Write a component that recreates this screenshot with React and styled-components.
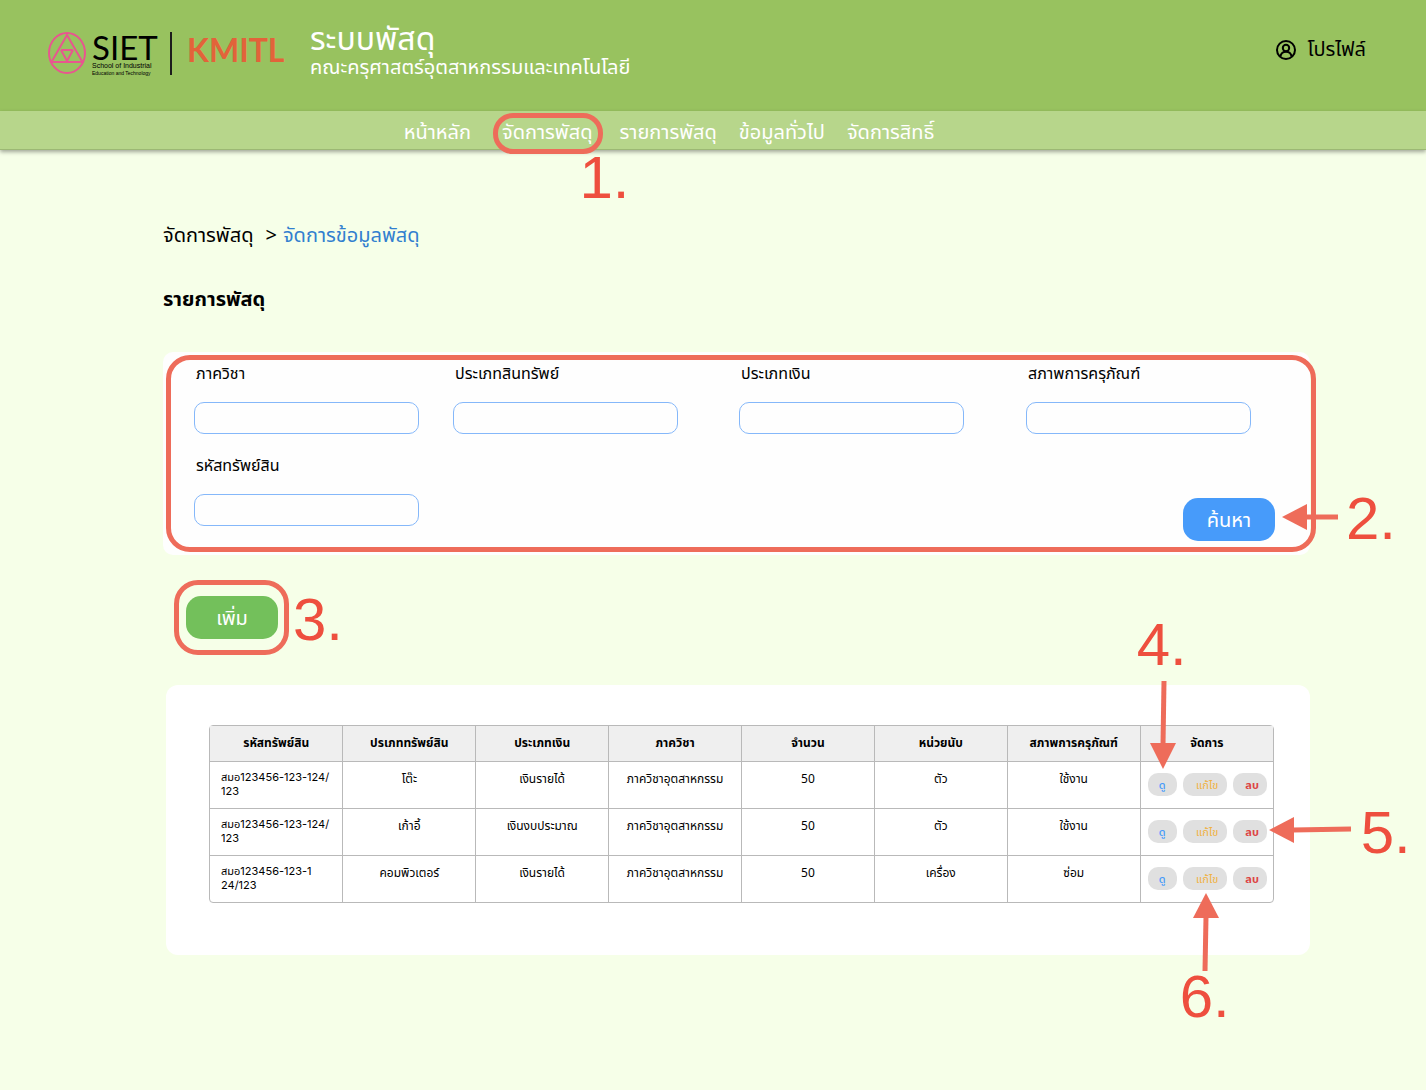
import React from "react";
import styled, { createGlobalStyle } from "styled-components";

const thai = `"Noto Sans Thai", "Noto Sans", "Open Sans", sans-serif`;

const GlobalStyle = createGlobalStyle`
  *, *::before, *::after { box-sizing: border-box; }
  body {
    margin: 0;
    min-height: 100vh;
    background: #f6ffe8;
    color: #000;
    font-family: ${thai};
    font-size: 20px;
  }
  button, input { font: inherit; }
  a { color: inherit; text-decoration: none; }
`;

const TopBar = styled.header`
  display: flex;
  align-items: flex-start;
  min-height: 111px;
  padding: 24px 60px 0 48px;
  background: #98c25f;
`;

const Brand = styled.div`
  display: flex;
  align-items: flex-start;
  padding-top: 8px;
`;

const Emblem = styled.svg`
  display: block;
  width: 38px;
  height: 42px;
`;

const Siet = styled.div`
  width: 66px;
  margin-left: 6px;
  white-space: nowrap;
`;

const SietName = styled.div`
  font-family: Lato, sans-serif;
  font-size: 33px;
  line-height: 30px;
`;

const SietLine = styled.div`
  font-family: "Liberation Sans", sans-serif;
  font-size: ${(p) => (p.$small ? 5 : 7)}px;
  line-height: ${(p) => (p.$small ? 6 : 8)}px;
`;

const BrandRule = styled.div`
  width: 2px;
  height: 43px;
  margin: 0 15px 0 12px;
  background: #1c1c1c;
`;

const Kmitl = styled.div`
  width: 95px;
  font-family: Lato, sans-serif;
  font-size: 32px;
  font-weight: 700;
  line-height: 36px;
  color: #e2633a;
`;

const Titles = styled.div`
  margin-left: 28px;
  padding-top: 1px;
  color: #fff;
`;

const AppName = styled.h1`
  margin: 0;
  font-size: 32px;
  font-weight: 400;
  line-height: 30px;
`;

const Faculty = styled.p`
  margin: 0;
  line-height: 26px;
`;

const Profile = styled.a`
  display: flex;
  align-items: center;
  gap: 10px;
  margin-left: auto;
  padding-top: 13px;
  line-height: 26px;
`;

const ProfileIcon = styled.svg`
  display: block;
  width: 22px;
  height: 22px;
`;

const NavBar = styled.nav`
  display: flex;
  justify-content: center;
  gap: 22px;
  height: 39px;
  padding: 9px 88px 0 0;
  background: #b7d68b;
  border-bottom: 1px solid #9cb874;
  box-shadow: 0 2px 4px rgba(0, 0, 0, 0.35);
  color: #fff;
  line-height: 26px;
`;

const NavLink = styled.a`
  position: relative;
  margin: ${(p) => (p.$active ? "0 5px 0 9px" : "0")};
  white-space: nowrap;
`;

const Ring = styled.span`
  position: absolute;
  inset: ${(p) => p.$inset};
  border: 5px solid #ee6c5a;
  border-radius: ${(p) => p.$radius}px;
  pointer-events: none;
`;

const StepNumber = styled.span`
  position: absolute;
  top: ${(p) => p.$top}px;
  left: ${(p) => p.$left};
  color: #ee4f3e;
  font-family: "Liberation Sans", Arial, sans-serif;
  font-size: 60px;
  font-weight: 400;
  line-height: 60px;
  pointer-events: none;
`;

const ArrowSvg = styled.svg`
  position: absolute;
  top: ${(p) => p.$top}px;
  left: ${(p) => p.$left};
  pointer-events: none;
  overflow: visible;
`;

const Main = styled.main`
  padding: 72px 116px 60px 163px;
`;

const Crumbs = styled.div`
  display: flex;
  line-height: 28px;
`;

const CrumbMark = styled.span`
  margin: 0 6px 0 12px;
`;

const CrumbLink = styled.a`
  color: #327fcf;
`;

const Heading = styled.h2`
  margin: 36px 0 38px;
  font-size: 20px;
  font-weight: 700;
  line-height: 28px;
`;

const SearchPanel = styled.form`
  position: relative;
  display: grid;
  grid-template-columns: 259fr 286fr 287fr 284fr;
  align-content: start;
  row-gap: 20px;
  min-height: 203px;
  padding: 10px 0 0 31px;
  background: #fefefe;
  border-radius: 10px;
`;

const Field = styled.div`
  display: flex;
  flex-direction: column;
  align-items: flex-start;
  gap: 16px;
`;

const FieldLabel = styled.label`
  padding-left: 2px;
  font-size: 16px;
  line-height: 24px;
`;

const TextBox = styled.input`
  width: 225px;
  height: 32px;
  padding: 0 10px;
  background: #fefefe;
  border: 1px solid #85b8fa;
  border-radius: 10px;
  font-size: 16px;
`;

const ActionButton = styled.button`
  display: block;
  width: 92px;
  height: 43px;
  padding: 2px 0 0;
  border: 0;
  border-radius: 15px;
  background: ${(p) => p.$fill};
  color: #fff;
  line-height: 26px;
`;

const SearchSlot = styled.div`
  position: relative;
  grid-column: 4;
  justify-self: end;
  align-self: end;
  margin-right: 35px;
  margin-bottom: -15px;
`;

const AddSlot = styled.div`
  position: relative;
  width: 92px;
  height: 43px;
  margin: 41px 0 46px 23px;
`;

const TableCard = styled.section`
  margin-left: 3px;
  padding: 40px 36px 52px 43px;
  background: #fff;
  border-radius: 12px;
`;

const Frame = styled.div`
  border: 1px solid #b9b9b9;
  border-radius: 4px;
`;

const Table = styled.table`
  width: 100%;
  border-collapse: collapse;
  table-layout: fixed;
  font-size: 12px;
`;

const Th = styled.th`
  height: 35px;
  padding: 0;
  background: #efefef;
  font-weight: 700;
  line-height: 18px;
  &:not(:first-child) { border-left: 1px solid #b9b9b9; }
`;

const Td = styled.td`
  height: 47px;
  padding: 8px 0 0;
  border-top: 1px solid #b9b9b9;
  line-height: 18px;
  text-align: center;
  vertical-align: top;
  &:not(:first-child) { border-left: 1px solid #b9b9b9; }
`;

const CodeTd = styled(Td)`
  padding: 8px 10px 0 11px;
  font-family: Inter, ${thai};
  font-size: 11px;
  line-height: 14px;
  text-align: left;
`;

const Actions = styled.div`
  display: flex;
  gap: 6px;
  padding: 3px 0 0 7px;
`;

const Pill = styled.button`
  position: relative;
  width: ${(p) => p.$width}px;
  height: 23px;
  padding: ${(p) => p.$padding};
  border: 0;
  border-radius: 10px;
  background: #e0e0e0;
  color: ${(p) => p.$color};
  font-size: 11px;
  font-weight: ${(p) => p.$weight || 400};
  line-height: 16px;
`;

const rows = [
  [["สมอ123456-123-124/", "123"], "โต๊ะ", "เงินรายได้", "ภาควิชาอุตสาหกรรม", "50", "ตัว", "ใช้งาน"],
  [["สมอ123456-123-124/", "123"], "เก้าอี้", "เงินงบประมาณ", "ภาควิชาอุตสาหกรรม", "50", "ตัว", "ใช้งาน"],
  [["สมอ123456-123-1", "24/123"], "คอมพิวเตอร์", "เงินรายได้", "ภาควิชาอุตสาหกรรม", "50", "เครื่อง", "ซ่อม"],
];

const headings = ["รหัสทรัพย์สิน", "ปรเภททรัพย์สิน", "ประเภทเงิน", "ภาควิชา", "จำนวน", "หน่วยนับ", "สภาพการครุภัณฑ์", "จัดการ"];

const fields = [
  ["dept", "ภาควิชา"],
  ["asset", "ประเภทสินทรัพย์"],
  ["fund", "ประเภทเงิน"],
  ["state", "สภาพการครุภัณฑ์"],
  ["code", "รหัสทรัพย์สิน"],
];

function Arrow({ top, left, width, height, shaft, head }) {
  return (
    <ArrowSvg $top={top} $left={left} width={width} height={height} viewBox={`0 0 ${width} ${height}`} aria-hidden="true">
      <path d={shaft} stroke="#ee6c5a" strokeWidth="5" fill="none" />
      <path d={head} fill="#ee6c5a" />
    </ArrowSvg>
  );
}

function Logo() {
  return (
    <Brand>
      <Emblem viewBox="0 0 38 42" fill="none" stroke="#e8568f" strokeWidth="2" aria-hidden="true">
        <ellipse cx="19" cy="21" rx="18" ry="20" />
        <path d="M19 3 L3.5 30 H34.5 Z" />
        <path d="M13 18 H25 M13 18 L19 29 L25 18" />
      </Emblem>
      <Siet>
        <SietName>SIET</SietName>
        <SietLine>School of Industrial</SietLine>
        <SietLine $small>Education and Technology</SietLine>
      </Siet>
      <BrandRule />
      <Kmitl>KMITL</Kmitl>
    </Brand>
  );
}

export default function App() {
  return (
    <>
      <GlobalStyle />
      <TopBar>
        <Logo />
        <Titles>
          <AppName>ระบบพัสดุ</AppName>
          <Faculty>คณะครุศาสตร์อุตสาหกรรมและเทคโนโลยี</Faculty>
        </Titles>
        <Profile href="#profile">
          <ProfileIcon viewBox="0 0 22 22" fill="none" stroke="#000" strokeWidth="2" aria-hidden="true">
            <circle cx="11" cy="11" r="9" />
            <circle cx="11" cy="9" r="3.2" />
            <path d="M5.5 17.5 C6 11 16 11 16.5 17.5" />
          </ProfileIcon>
          โปรไฟล์
        </Profile>
      </TopBar>
      <NavBar>
        <NavLink href="#home">หน้าหลัก</NavLink>
        <NavLink href="#manage" $active>
          จัดการพัสดุ
          <Ring $inset="-7px -10px -5px -9px" $radius={20} />
          <StepNumber $top={28} $left="calc(100% - 13px)">1.</StepNumber>
        </NavLink>
        <NavLink href="#items">รายการพัสดุ</NavLink>
        <NavLink href="#info">ข้อมูลทั่วไป</NavLink>
        <NavLink href="#rights">จัดการสิทธิ์</NavLink>
      </NavBar>
      <Main>
        <Crumbs>
          <a href="#manage">จัดการพัสดุ</a>
          <CrumbMark>&gt;</CrumbMark>
          <CrumbLink href="#data">จัดการข้อมูลพัสดุ</CrumbLink>
        </Crumbs>
        <Heading>รายการพัสดุ</Heading>
        <SearchPanel onSubmit={(e) => e.preventDefault()}>
          {fields.map(([id, label]) => (
            <Field key={id}>
              <FieldLabel htmlFor={id}>{label}</FieldLabel>
              <TextBox id={id} type="text" />
            </Field>
          ))}
          <Ring $inset="3px -6px 3px 3px" $radius={24} />
          <SearchSlot>
            <ActionButton $fill="#479bfa">ค้นหา</ActionButton>
            <Arrow top={6} left="99px" width={56} height={26} shaft="M24 13 H56" head="M0 13 L25 0 V26 Z" />
            <StepNumber $top={-9} $left="163px">2.</StepNumber>
          </SearchSlot>
        </SearchPanel>
        <AddSlot>
          <ActionButton $fill="#73c05b">เพิ่ม</ActionButton>
          <Ring $inset="-16px -11px -16px -12px" $radius={24} />
          <StepNumber $top={-6} $left="107px">3.</StepNumber>
        </AddSlot>
        <TableCard>
          <Frame>
            <Table>
              <thead>
                <tr>{headings.map((h) => <Th key={h}>{h}</Th>)}</tr>
              </thead>
              <tbody>
                {rows.map(([code, ...cells], r) => (
                  <tr key={r}>
                    <CodeTd>{code[0]}<br />{code[1]}</CodeTd>
                    {cells.map((c, i) => <Td key={i}>{c}</Td>)}
                    <Td>
                      <Actions>
                        <Pill $width={29} $padding="3px 0 0" $color="#479bfa" $weight={500}>
                          ดู
                          {r === 0 && (
                            <>
                              <Arrow top={-92} left="2px" width={26} height={88} shaft="M14 0 L13 64" head="M0 62 H26 L13 88 Z" />
                              <StepNumber $top={-158} $left="-11px">4.</StepNumber>
                            </>
                          )}
                        </Pill>
                        <Pill $width={44} $padding="3px 0 0 5px" $color="#f0b13f">
                          แก้ไข
                          {r === 2 && (
                            <>
                              <Arrow top={26} left="10px" width={26} height={78} shaft="M12 78 L13 24" head="M13 0 L26 25 H0 Z" />
                              <StepNumber $top={100} $left="-3px">6.</StepNumber>
                            </>
                          )}
                        </Pill>
                        <Pill $width={34} $padding="3px 0 0 5px" $color="#dd4444" $weight={700}>
                          ลบ
                          {r === 1 && (
                            <>
                              <Arrow top={-3} left="36px" width={82} height={26} shaft="M24 13 L82 12" head="M0 13 L25 0 V26 Z" />
                              <StepNumber $top={-17} $left="128px">5.</StepNumber>
                            </>
                          )}
                        </Pill>
                      </Actions>
                    </Td>
                  </tr>
                ))}
              </tbody>
            </Table>
          </Frame>
        </TableCard>
      </Main>
    </>
  );
}
